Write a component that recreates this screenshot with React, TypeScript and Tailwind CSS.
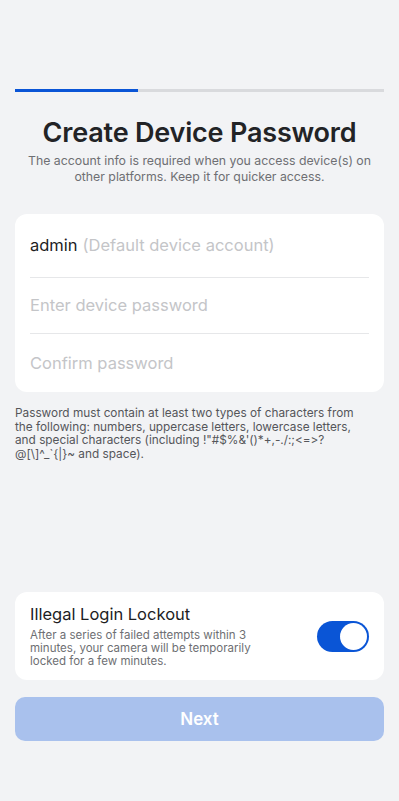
import React from 'react';

export default function App() {
  return (
    <div
      className="min-h-screen w-full bg-[#f2f3f5] flex flex-col px-[15px] [font-feature-settings:'calt'_0]"
      style={{ fontFamily: 'Inter, "Noto Sans", sans-serif' }}
    >
      {/* progress */}
      <div className="mt-[89px] h-[3px] w-full bg-[#d9dadd] flex">
        <div className="h-full w-[123px] bg-[#0a55d6]" />
      </div>

      <h1 className="mt-[24px] text-center text-[27px] leading-[34px] font-semibold text-[#222326] tracking-[-0.2px]">
        Create Device Password
      </h1>
      <p className="mt-[3px] text-center text-[12.3px] leading-[16px] text-[#6e6f73] px-[10px]">
        The account info is required when you access device(s) on other platforms. Keep it for quicker access.
      </p>

      {/* fields card */}
      <div className="mt-[29px] bg-white rounded-[12px] px-[15px]">
        <div className="h-[64px] flex items-center text-[16.5px] border-b border-[#e6e7e9]">
          <span className="text-[#1d1d1f]">admin</span>
          <span className="ml-[5px] text-[#c4c5c8]">(Default device account)</span>
        </div>
        <div className="h-[56px] flex items-center text-[16.5px] text-[#c4c5c8] border-b border-[#e6e7e9]">
          Enter device password
        </div>
        <div className="h-[58px] flex items-center text-[16.5px] text-[#c4c5c8]">Confirm password</div>
      </div>

      <p className="mt-[15px] text-[11.8px] leading-[13.6px] text-[#55565a] pr-[12px]">
        Password must contain at least two types of characters from the following: numbers, uppercase letters, lowercase letters, and special characters (including !"#$%&amp;'()*+,-./:;&lt;=&gt;?
        <br />
        @[\]^_`{'{'}|{'}'}~ and space).
      </p>

      {/* lockout card */}
      <div className="mt-[131px] bg-white rounded-[12px] px-[15px] py-[12px] flex items-center">
        <div className="flex-1 pr-[20px]">
          <div className="text-[16.5px] leading-[20px] text-[#1d1d1f]">Illegal Login Lockout</div>
          <div className="mt-[5px] text-[11.5px] leading-[13px] text-[#6e6f73] w-[225px]">
            After a series of failed attempts within 3 minutes, your camera will be temporarily locked for a few minutes.
          </div>
        </div>
        <div className="w-[52px] h-[31px] rounded-full bg-[#0a55d6] flex items-center justify-end p-[2px]">
          <div className="w-[27px] h-[27px] rounded-full bg-white" />
        </div>
      </div>

      <button className="mt-[17px] h-[44px] w-full rounded-[10px] bg-[#a9c1ed] text-white text-[17px] font-semibold">
        Next
      </button>
    </div>
  );
}
